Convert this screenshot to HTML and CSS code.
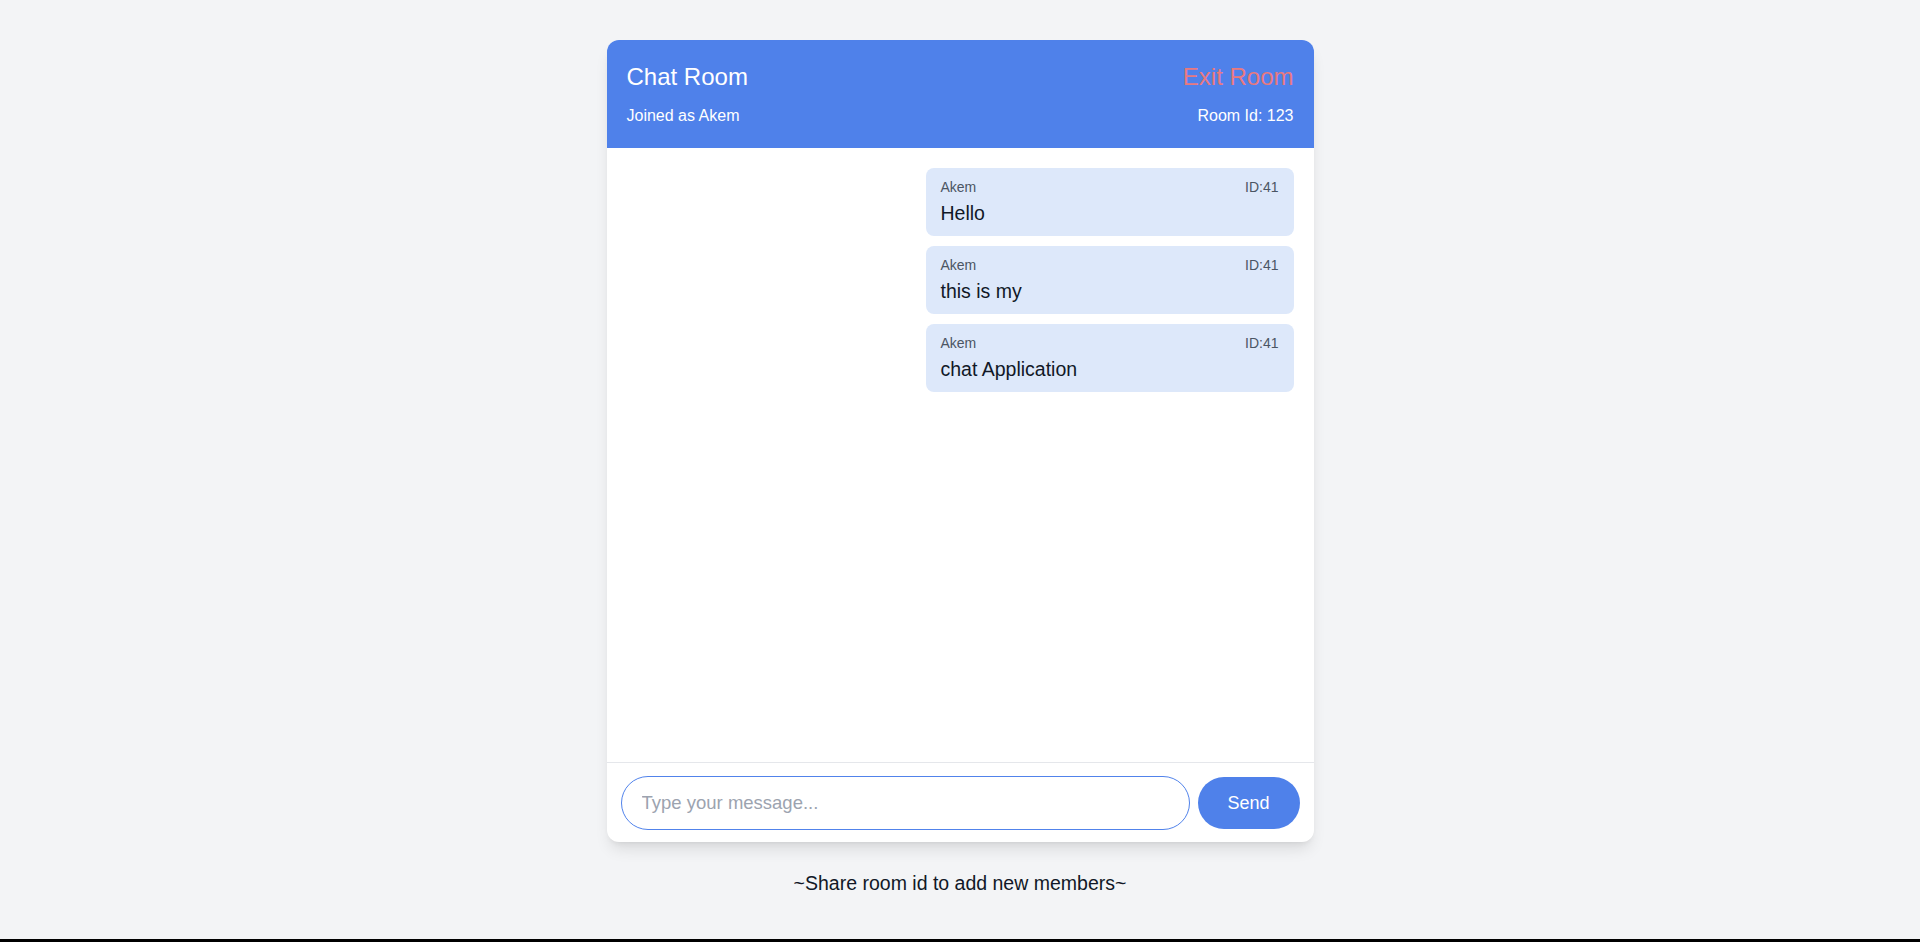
FILE: index.html
```html
<!DOCTYPE html>
<html lang="en">
<head>
<meta charset="utf-8">
<title>Chat Room</title>
<link rel="stylesheet" href="styles.css">
</head>
<body>
<main class="page">
  <section class="card">
    <header class="card-header">
      <div class="header-row">
        <h1 class="title">Chat Room</h1>
        <button class="exit">Exit Room</button>
      </div>
      <div class="header-row sub">
        <span>Joined as Akem</span>
        <span>Room Id: 123</span>
      </div>
    </header>
    <div class="messages">
      <div class="bubble">
        <div class="meta"><span>Akem</span><span>ID:41</span></div>
        <div class="text">Hello</div>
      </div>
      <div class="bubble">
        <div class="meta"><span>Akem</span><span>ID:41</span></div>
        <div class="text">this is my</div>
      </div>
      <div class="bubble">
        <div class="meta"><span>Akem</span><span>ID:41</span></div>
        <div class="text">chat Application</div>
      </div>
    </div>
    <form class="composer">
      <input class="msg-input" type="text" placeholder="Type your message..." autofocus>
      <button class="send" type="button">Send</button>
    </form>
  </section>
  <p class="hint">~Share room id to add new members~</p>
</main>
</body>
</html>
```

FILE: styles.css
```css
html {
  margin: 0;
  background: #000;
}
body {
  margin: 0;
  height: 939px;
  background: #f3f4f6;
  font-family: "Liberation Sans", Arial, sans-serif;
  color: #111827;
}
.page {
  display: flex;
  flex-direction: column;
  align-items: center;
  padding-top: 40px;
}
.card {
  width: 707px;
  height: 802px;
  background: #fff;
  border-radius: 12px;
  box-shadow: 0 10px 15px -3px rgba(0,0,0,0.1), 0 4px 6px -4px rgba(0,0,0,0.1);
  display: flex;
  flex-direction: column;
  overflow: hidden;
}
.card-header {
  background: #4f81ea;
  color: #fff;
  padding: 21px 20px 20px;
  display: flex;
  flex-direction: column;
  gap: 11px;
}
.header-row {
  display: flex;
  justify-content: space-between;
  align-items: center;
  height: 32px;
}
.header-row.sub {
  height: 24px;
  font-size: 16px;
  line-height: 24px;
}
.title {
  margin: 0;
  font-size: 24px;
  line-height: 32px;
  font-weight: 400;
}
.exit {
  background: none;
  border: 0;
  padding: 0;
  font-family: inherit;
  font-size: 24px;
  line-height: 32px;
  color: #e9797f;
  cursor: pointer;
}
.messages {
  flex: 1;
  display: flex;
  flex-direction: column;
  align-items: flex-end;
  gap: 10px;
  padding: 20px;
}
.bubble {
  width: 368px;
  box-sizing: border-box;
  background: #dde8fa;
  border-radius: 8px;
  padding: 9px 15px 10px;
}
.meta {
  display: flex;
  justify-content: space-between;
  font-size: 14px;
  line-height: 20px;
  color: #4b5563;
}
.text {
  margin-top: 3px;
  font-size: 19.5px;
  line-height: 26px;
  color: #111827;
}
.composer {
  margin: 0;
  border-top: 1px solid #e5e7eb;
  padding: 13px 14px 12px;
  display: flex;
  align-items: center;
  gap: 8px;
}
.msg-input {
  flex: 1;
  height: 54px;
  box-sizing: border-box;
  border: 1px solid #5183eb;
  border-radius: 27px;
  padding: 0 20px;
  font-family: inherit;
  font-size: 18.5px;
  color: #111827;
  outline: none;
  background: #fff;
}
.msg-input::placeholder {
  color: #9ca3af;
}
.send {
  width: 102px;
  height: 52px;
  border: 0;
  border-radius: 26px;
  background: #4f81ea;
  color: #fff;
  font-family: inherit;
  font-size: 18px;
  cursor: pointer;
}
.hint {
  margin: 27px 0 0;
  font-size: 19.5px;
  line-height: 28px;
  color: #111827;
}
```
